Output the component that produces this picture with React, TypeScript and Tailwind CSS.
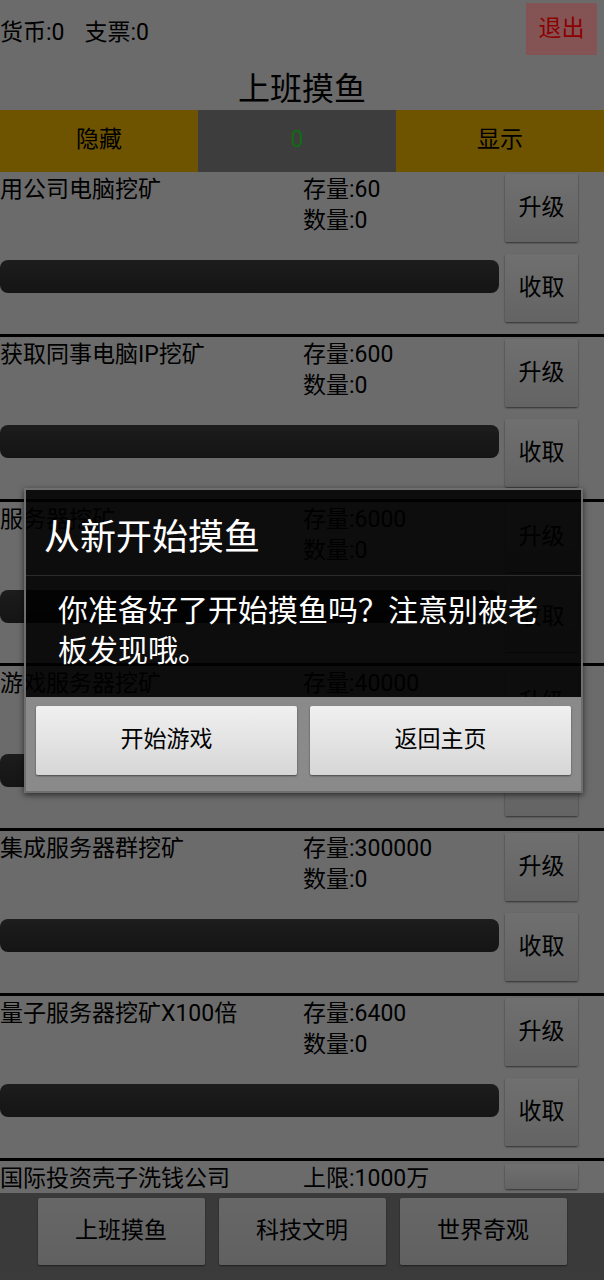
import React from 'react';

type Mine = { name: string; stock: string; count?: string };

const mines: Mine[] = [
  { name: '用公司电脑挖矿', stock: '存量:60', count: '数量:0' },
  { name: '获取同事电脑IP挖矿', stock: '存量:600', count: '数量:0' },
  { name: '服务器挖矿', stock: '存量:6000', count: '数量:0' },
  { name: '游戏服务器挖矿', stock: '存量:40000', count: '数量:0' },
  { name: '集成服务器群挖矿', stock: '存量:300000', count: '数量:0' },
  { name: '量子服务器挖矿X100倍', stock: '存量:6400', count: '数量:0' },
];

const font = { fontFamily: 'Roboto, "Noto Sans CJK SC", sans-serif' };

const grayBtn =
  'w-[73px] rounded-[2px] bg-gradient-to-b from-[#cbcbcb] to-[#b6b6b6] text-[23px] text-black shadow-[0_1px_2px_rgba(0,0,0,0.55)]';

function MineRow({ mine }: { mine: Mine }) {
  return (
    <div className="flex h-[164.8px] shrink-0 border-b-[3px] border-black pr-[26px]">
      <div className="flex flex-1 flex-col">
        <div className="flex pt-[2px] text-[23px] leading-[31px] text-black">
          <div className="w-[303px]">{mine.name}</div>
          <div>
            <div>{mine.stock}</div>
            <div>{mine.count}</div>
          </div>
        </div>
        <div className="mr-[6px] mt-[24px] h-[33px] rounded-[8px] bg-gradient-to-b from-[#353535] to-[#262626]" />
      </div>
      <div className="flex w-[73px] flex-col gap-[12px] pt-[2px]">
        <button className={`h-[68px] ${grayBtn}`}>升级</button>
        <button className={`h-[68px] ${grayBtn}`}>收取</button>
      </div>
    </div>
  );
}

export default function App() {
  return (
    <div className="relative flex h-[1280px] w-full flex-col overflow-hidden bg-[#c3c3c3]" style={font}>
      {/* header: balances + exit */}
      <div className="flex h-[62px] shrink-0 items-start justify-between">
        <div className="mt-[18px] flex gap-[20px] text-[23px] leading-[30px] text-black">
          <span>货币:0</span>
          <span>支票:0</span>
        </div>
        <button className="mr-[7px] mt-[3px] h-[52px] w-[71px] bg-[#f09a9a] text-[23px] text-[#ff0000]">退出</button>
      </div>

      <div className="flex h-[48px] shrink-0 items-center justify-center pt-[5px] text-[32px] text-black">上班摸鱼</div>

      <div className="grid h-[62px] shrink-0 grid-cols-[198px_198px_1fr] text-[23px]">
        <div className="flex items-center justify-center pb-[2px] bg-[#c89a00] text-black">隐藏</div>
        <div className="flex items-center justify-center pb-[2px] bg-[#707070] text-[#22c222]">0</div>
        <div className="flex items-center justify-center pb-[2px] bg-[#c89a00] text-black">显示</div>
      </div>

      <div className="flex flex-1 flex-col overflow-hidden">
        {mines.map((m) => (
          <MineRow key={m.name} mine={m} />
        ))}
        {/* company row: only its header line shows above the tabs */}
        <div className="flex shrink-0 pr-[26px]">
          <div className="flex flex-1 pt-[2px] text-[23px] leading-[31px] text-black">
            <div className="w-[303px]">国际投资壳子洗钱公司</div>
            <div>上限:1000万</div>
          </div>
          <div className="pt-[3px]">
            <button className={`block h-[25px] ${grayBtn}`} />
          </div>
        </div>
      </div>

      {/* bottom tabs */}
      <div className="flex h-[87px] shrink-0 justify-center gap-[14px] bg-[#6b6b6b] pt-[5px]">
        {['上班摸鱼', '科技文明', '世界奇观'].map((t) => (
          <button
            key={t}
            className="h-[67px] w-[167px] rounded-[2px] bg-gradient-to-b from-[#bcbcbc] to-[#b0b0b0] text-[23px] text-black shadow-[0_1px_2px_rgba(0,0,0,0.5)]"
          >
            {t}
          </button>
        ))}
      </div>

      {/* dim layer */}
      <div className="absolute inset-0 bg-black/45" />

      {/* restart dialog */}
      <div className="absolute left-[24px] top-[488px] w-[559px] border-2 border-[#6e6e6e] shadow-[0_2px_6px_rgba(0,0,0,0.6)]">
        <div className="h-[86px] border-b border-[#2c2c2c] bg-black/[0.88] pl-[18px] pt-[26px] text-[36px] leading-[44px] text-white">
          从新开始摸鱼
        </div>
        <div className="h-[121px] bg-black/[0.88] pl-[32px] pr-[30px] pt-[15px] text-[30px] leading-[40px] text-white">
          你准备好了开始摸鱼吗？注意别被老板发现哦。
        </div>
        <div className="flex h-[94px] gap-[13px] bg-[#8a8a8a] px-[10px] pt-[9px]">
          {['开始游戏', '返回主页'].map((t) => (
            <button
              key={t}
              className="h-[69px] flex-1 rounded-[2px] bg-gradient-to-b from-[#f0f0f0] to-[#d6d6d6] text-[23px] text-black shadow-[0_1px_2px_rgba(0,0,0,0.5)]"
            >
              {t}
            </button>
          ))}
        </div>
      </div>
    </div>
  );
}
